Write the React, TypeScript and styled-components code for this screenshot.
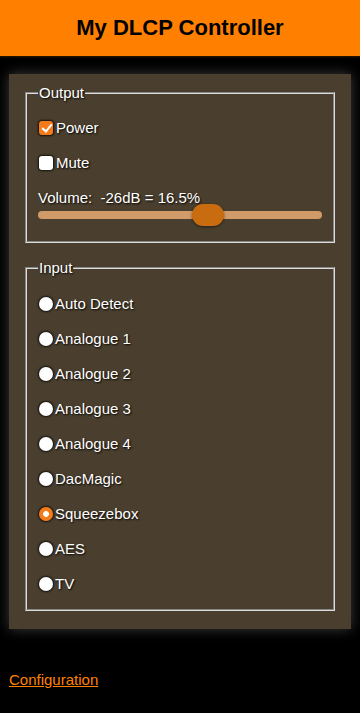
import React, { useState } from "react";
import styled, { createGlobalStyle } from "styled-components";

const Global = createGlobalStyle`
  html, body { margin: 0; padding: 0; background: #000; }
  body { font-family: "Liberation Sans", Arial, sans-serif; font-size: 15px; color: #fff; }
  * { box-sizing: border-box; }
`;

const Header = styled.header`
  height: 56px;
  background: #ff8000;
  display: flex;
  align-items: center;
  justify-content: center;
  box-shadow: 0 1px 2px rgba(60, 30, 0, 0.9);
`;

const Title = styled.h1`
  margin: 0;
  font-size: 22px;
  font-weight: bold;
  color: #000;
`;

const Panel = styled.main`
  margin: 18px 9px 0;
  background: #4a3f2e;
  padding: 10px 16px 18px;
  display: flex;
  flex-direction: column;
  gap: 16px;
  box-shadow: 0 0 12px rgba(110, 110, 110, 0.55);
`;

const Fieldset = styled.fieldset<{ $pt: number; $pb: number }>`
  margin: 0;
  border: 2px groove #dcdcdc;
  padding: ${(p) => p.$pt}px 11px ${(p) => p.$pb}px;
  min-width: 0;
`;

const Legend = styled.legend`
  padding: 0 1px;
  margin-left: 0;
  line-height: 17px;
  text-shadow: 1px 1px 2px #000;
`;

const Row = styled.label`
  display: flex;
  align-items: center;
  height: 35px;
  line-height: 17px;
  text-shadow: 1px 1px 2px #000;
  cursor: pointer;
`;

const Check = styled.input.attrs({ type: "checkbox" })`
  appearance: none;
  width: 14px;
  height: 14px;
  margin: 0 3px 0 1px;
  border-radius: 3px;
  background: #fff;
  box-shadow: 0 0 2px 1px rgba(0, 0, 0, 0.75);
  position: relative;
  flex: none;
  &:checked {
    background: #f57a1a;
  }
  &:checked::after {
    content: "";
    position: absolute;
    left: 4.5px;
    top: 1px;
    width: 4px;
    height: 8px;
    border: solid #fff;
    border-width: 0 2px 2px 0;
    transform: rotate(40deg);
  }
`;

const Radio = styled.input.attrs({ type: "radio" })`
  appearance: none;
  width: 14px;
  height: 14px;
  margin: 0 2px 0 1px;
  border-radius: 50%;
  background: #fff;
  box-shadow: 0 0 2px 1px rgba(0, 0, 0, 0.75);
  flex: none;
  &:checked {
    background: radial-gradient(circle, #fff 0 2.6px, #f57a1a 3.2px);
  }
`;

const VolumeLabel = styled.div`
  margin-top: 9px;
  line-height: 17px;
  text-shadow: 1px 1px 2px #000;
  white-space: pre;
`;

const Slider = styled.input.attrs({ type: "range" })`
  appearance: none;
  display: block;
  width: 100%;
  height: 22px;
  margin: -2px 0 0;
  background: transparent;
  &::-webkit-slider-runnable-track {
    height: 8px;
    border-radius: 4px;
    background: #d09b69;
  }
  &::-webkit-slider-thumb {
    appearance: none;
    width: 32px;
    height: 22px;
    margin-top: -7px;
    border-radius: 11px;
    background: #c96c0f;
    box-shadow: 0 1px 3px rgba(0, 0, 0, 0.5);
  }
`;

const Footer = styled.div`
  padding: 42px 9px 0;
  line-height: 17px;
`;

const Link = styled.a`
  color: #ff8000;
  text-decoration: underline;
`;

const inputs = [
  "Auto Detect",
  "Analogue 1",
  "Analogue 2",
  "Analogue 3",
  "Analogue 4",
  "DacMagic",
  "Squeezebox",
  "AES",
  "TV",
];

export default function App() {
  const [power, setPower] = useState(true);
  const [mute, setMute] = useState(false);
  const [vol, setVol] = useState(61);
  const [src, setSrc] = useState("Squeezebox");
  return (
    <>
      <Global />
      <Header>
        <Title>My DLCP Controller</Title>
      </Header>
      <Panel>
        <Fieldset $pt={9} $pb={15}>
          <Legend>Output</Legend>
          <Row>
            <Check checked={power} onChange={(e) => setPower(e.target.checked)} />
            Power
          </Row>
          <Row>
            <Check checked={mute} onChange={(e) => setMute(e.target.checked)} />
            Mute
          </Row>
          <VolumeLabel>{"Volume:  -26dB = 16.5%"}</VolumeLabel>
          <Slider min={0} max={100} value={vol} onChange={(e) => setVol(Number(e.target.value))} />
        </Fieldset>
        <Fieldset $pt={10} $pb={8}>
          <Legend>Input</Legend>
          {inputs.map((name) => (
            <Row key={name}>
              <Radio name="input" checked={src === name} onChange={() => setSrc(name)} />
              {name}
            </Row>
          ))}
        </Fieldset>
      </Panel>
      <Footer>
        <Link href="#">Configuration</Link>
      </Footer>
    </>
  );
}
